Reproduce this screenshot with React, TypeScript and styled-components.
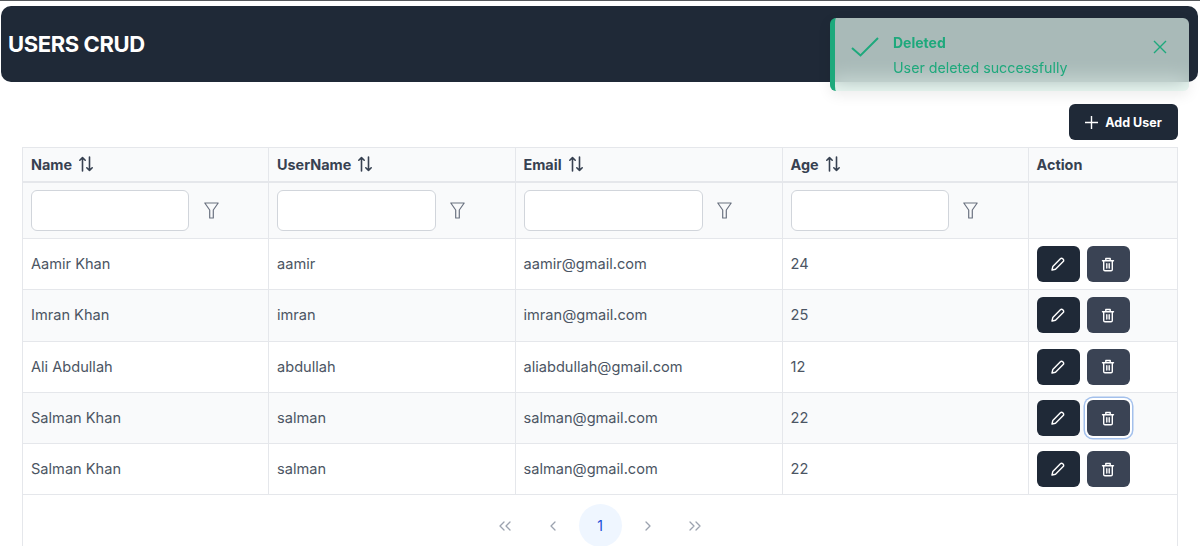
import React from "react";
import styled, { createGlobalStyle } from "styled-components";

const Global = createGlobalStyle`
  html, body { margin: 0; padding: 0; background: #fff; height: 546px; overflow: hidden; }
  body { font-family: Inter, "Liberation Sans", sans-serif; -webkit-font-smoothing: antialiased; }
  * { box-sizing: border-box; }
`;

const Page = styled.div`
  position: relative;
  height: 546px;
  overflow: hidden;
  border-top: 1px solid #55585c;
`;
const Header = styled.header`
  height: 76px;
  margin: 5px 2px 0 1px;
  padding-left: 7px;
  background: #1f2937;
  border-radius: 10px;
  display: flex;
  align-items: center;
`;
const Title = styled.h1`
  margin: 0 0 1px;
  color: #fff;
  font-size: 22px;
  font-weight: 700;
  letter-spacing: -0.4px;
`;
const Toast = styled.div`
  position: absolute;
  top: 17px;
  right: 11px;
  width: 359px;
  height: 73px;
  display: flex;
  align-items: flex-start;
  color: #1ea97c;
  background: rgba(228, 248, 240, 0.7);
  backdrop-filter: blur(10px);
  border-left: 5px solid #1ea97c;
  border-radius: 6px;
  box-shadow: 0 4px 14px rgba(0, 0, 0, 0.08);
`;
const ToastCheck = styled.svg`
  margin: 17px 0 0 15px;
  width: 30px;
  height: 24px;
  flex: none;
`;
const ToastBody = styled.div`
  margin: 16px 0 0 13px;
  flex: 1;
`;
const ToastTitle = styled.div`
  font-size: 14px;
  font-weight: 700;
  line-height: 17px;
`;
const ToastText = styled.div`
  margin-top: 8px;
  font-size: 14.25px;
  line-height: 17px;
`;
const ToastClose = styled.svg`
  width: 14px;
  height: 14px;
  margin: 22px 22px 0 0;
  flex: none;
`;
const Toolbar = styled.div`
  display: flex;
  justify-content: flex-end;
  margin: 22px 22px 0 0;
`;
const AddButton = styled.button`
  width: 109px;
  height: 36px;
  border: 0;
  border-radius: 6px;
  background: #1f2937;
  color: #fff;
  font: 700 12.5px Inter, sans-serif;
  display: flex;
  align-items: center;
  justify-content: center;
  gap: 7px;
`;
const TableWrap = styled.div`
  margin: 7px 22px 0;
  height: 420px;
  border-left: 1px solid #e5e7eb;
  border-right: 1px solid #e5e7eb;
`;
const Table = styled.table`
  width: 100%;
  table-layout: fixed;
  border-collapse: collapse;
`;
const Th = styled.th`
  height: 34px;
  padding: 0 8px;
  text-align: left;
  background: #f9fafb;
  color: #374151;
  font-size: 14.4px;
  font-weight: 700;
  border: 1px solid #e5e7eb;
  border-width: 1px 1px 2px 1px;
  &:first-child { border-left: 0; }
  &:last-child { border-right: 0; }
`;
const HeadInner = styled.span`
  display: flex;
  align-items: center;
  gap: 6px;
`;
const FilterCell = styled.th`
  height: 57px;
  padding: 0 8px;
  background: #f9fafb;
  border: 1px solid #e5e7eb;
  &:first-child { border-left: 0; }
  &:last-child { border-right: 0; }
`;
const FilterInner = styled.div`
  display: flex;
  align-items: center;
  padding-right: 27px;
`;
const FilterInput = styled.input`
  flex: 1;
  min-width: 0;
  height: 41px;
  background: #fff;
  border: 1px solid #d1d5db;
  border-radius: 6px;
  outline: none;
`;
const FilterButton = styled.span`
  width: 44px;
  flex: none;
  display: flex;
  justify-content: center;
`;
const Row = styled.tr<{ $striped: boolean }>`
  background: ${(p) => (p.$striped ? "#f9fafb" : "#fff")};
`;
const Td = styled.td`
  height: 51.3px;
  padding: 0 8px;
  color: #4b5563;
  font-size: 14.6px;
  border: 1px solid #e5e7eb;
  &:first-child { border-left: 0; }
  &:last-child { border-right: 0; }
`;
const Actions = styled.div`
  display: flex;
  gap: 7px;
`;
const IconButton = styled.button<{ $variant: "edit" | "delete"; $focused?: boolean }>`
  width: 43px;
  height: 36px;
  padding: 0;
  border: 0;
  border-radius: 6px;
  background: ${(p) => (p.$variant === "edit" ? "#1f2937" : "#3a4354")};
  display: flex;
  align-items: center;
  justify-content: center;
  box-shadow: ${(p) => (p.$focused ? "0 0 0 2px #fff, 0 0 0 3.5px #a3c0ec" : "none")};
`;
const Pager = styled.nav`
  display: flex;
  justify-content: center;
  align-items: center;
  gap: 4.5px;
  padding-top: 9px;
`;
const PageButton = styled.span<{ $active?: boolean }>`
  width: 43px;
  height: 43px;
  border-radius: 50%;
  display: flex;
  align-items: center;
  justify-content: center;
  font-size: 14px;
  color: #1d4ed8;
  background: ${(p) => (p.$active ? "#eff6ff" : "transparent")};
`;

const SortIcon = () => (
  <svg width="16" height="16" viewBox="0 0 16 16" fill="none" stroke="#374151" strokeWidth="1.6" strokeLinecap="round" strokeLinejoin="round">
    <path d="M4.5 15V1.500M1.800 4.200l2.700-2.700 2.700 2.700M11.500 1v13.500M8.800 11.800l2.700 2.700 2.700-2.700" />
  </svg>
);
const FunnelIcon = () => (
  <svg width="15" height="17" viewBox="0 0 15 17" fill="none" stroke="#6b7280" strokeWidth="1.2" strokeLinejoin="round">
    <path d="M.8 1h13.400L9.300 8v8H5.700V8z" />
  </svg>
);
const PencilIcon = () => (
  <svg width="14" height="14" viewBox="0 0 14 14" fill="none" stroke="#fff" strokeWidth="1.4" strokeLinejoin="round">
    <path d="M1 13l.8-3.400 7.600-7.800a1.600 1.600 0 0 1 2.300 0l.5.5a1.600 1.600 0 0 1 0 2.300l-7.700 7.700z" />
  </svg>
);
const TrashIcon = () => (
  <svg width="14" height="15" viewBox="0 0 14 15" fill="none" stroke="#fff" strokeWidth="1.4" strokeLinecap="round" strokeLinejoin="round">
    <path d="M1.500 3.700h11M4.800 3.700V1.500h4.400v2.200M2.700 3.700v8.800a1.300 1.300 0 0 0 1.300 1.300h6a1.300 1.300 0 0 0 1.300-1.300V3.700M5.800 6.800v4.200M8.200 6.800v4.200" />
  </svg>
);
const Chevrons = ({ d }: { d: string }) => (
  <svg width="14" height="12" viewBox="0 0 14 12" fill="none" stroke="#9ca3af" strokeWidth="1.3" strokeLinecap="round" strokeLinejoin="round">
    <path d={d} />
  </svg>
);

const columns = [
  { key: "Name", width: 245.5, sortable: true },
  { key: "UserName", width: 246.5, sortable: true },
  { key: "Email", width: 267, sortable: true },
  { key: "Age", width: 246, sortable: true },
  { key: "Action", width: 149, sortable: false },
];

const users = [
  ["Aamir Khan", "aamir", "aamir@gmail.com", "24"],
  ["Imran Khan", "imran", "imran@gmail.com", "25"],
  ["Ali Abdullah", "abdullah", "aliabdullah@gmail.com", "12"],
  ["Salman Khan", "salman", "salman@gmail.com", "22"],
  ["Salman Khan", "salman", "salman@gmail.com", "22"],
];

export default function App() {
  return (
    <Page>
      <Global />
      <Header>
        <Title>USERS CRUD</Title>
      </Header>
      <Toast>
        <ToastCheck viewBox="0 0 30 24" fill="none" stroke="#1ea97c" strokeWidth="2">
          <path d="M2 13l8.500 7.500L28 3" />
        </ToastCheck>
        <ToastBody>
          <ToastTitle>Deleted</ToastTitle>
          <ToastText>User deleted successfully</ToastText>
        </ToastBody>
        <ToastClose viewBox="0 0 14 14" fill="none" stroke="#1ea97c" strokeWidth="1.4">
          <path d="M1 1l12 12M13 1L1 13" />
        </ToastClose>
      </Toast>
      <Toolbar>
        <AddButton>
          <svg width="13" height="13" viewBox="0 0 13 13" fill="none" stroke="#fff" strokeWidth="1.4">
            <path d="M6.500 0v13M0 6.500h13" />
          </svg>
          Add User
        </AddButton>
      </Toolbar>
      <TableWrap>
        <Table>
          <colgroup>
            {columns.map((c) => (
              <col key={c.key} style={{ width: c.width }} />
            ))}
          </colgroup>
          <thead>
            <tr>
              {columns.map((c) => (
                <Th key={c.key}>
                  <HeadInner>
                    {c.key}
                    {c.sortable && <SortIcon />}
                  </HeadInner>
                </Th>
              ))}
            </tr>
            <tr>
              {columns.map((c) => (
                <FilterCell key={c.key}>
                  {c.sortable && (
                    <FilterInner>
                      <FilterInput aria-label={c.key} />
                      <FilterButton>
                        <FunnelIcon />
                      </FilterButton>
                    </FilterInner>
                  )}
                </FilterCell>
              ))}
            </tr>
          </thead>
          <tbody>
            {users.map((u, i) => (
              <Row key={i} $striped={i % 2 === 1}>
                {u.map((v, j) => (
                  <Td key={j}>{v}</Td>
                ))}
                <Td>
                  <Actions>
                    <IconButton $variant="edit" aria-label="Edit">
                      <PencilIcon />
                    </IconButton>
                    <IconButton $variant="delete" $focused={i === 3} aria-label="Delete">
                      <TrashIcon />
                    </IconButton>
                  </Actions>
                </Td>
              </Row>
            ))}
          </tbody>
        </Table>
        <Pager>
          <PageButton><Chevrons d="M6 2L2 6l4 4M12 2L8 6l4 4" /></PageButton>
          <PageButton><Chevrons d="M9 2L5 6l4 4" /></PageButton>
          <PageButton $active>1</PageButton>
          <PageButton><Chevrons d="M5 2l4 4-4 4" /></PageButton>
          <PageButton><Chevrons d="M2 2l4 4-4 4M8 2l4 4-4 4" /></PageButton>
        </Pager>
      </TableWrap>
    </Page>
  );
}
